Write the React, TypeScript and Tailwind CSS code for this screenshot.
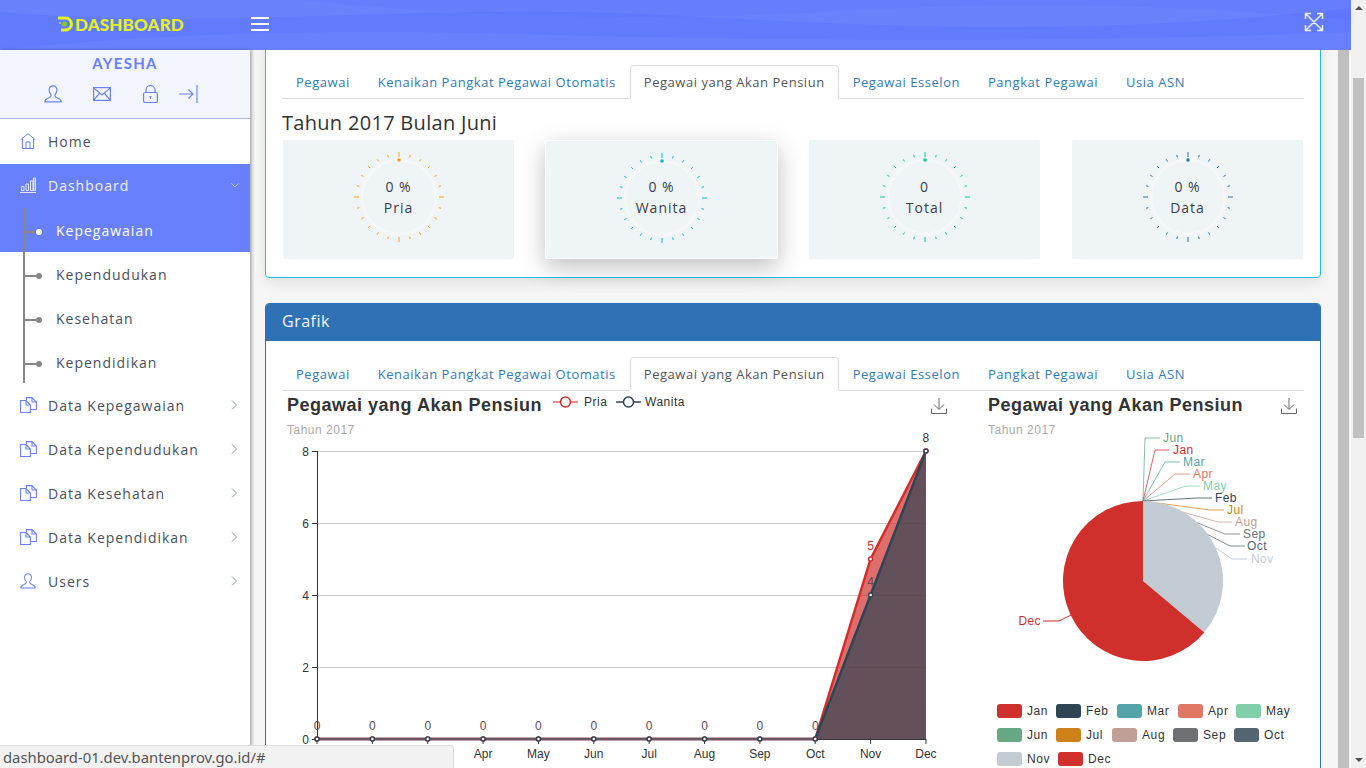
import React from "react";

const TABS = [
  "Pegawai",
  "Kenaikan Pangkat Pegawai Otomatis",
  "Pegawai yang Akan Pensiun",
  "Pegawai Esselon",
  "Pangkat Pegawai",
  "Usia ASN",
];

const GAUGES = [
  { value: "0 %", label: "Pria", color: "#ff9f0f", raised: false },
  { value: "0 %", label: "Wanita", color: "#12b5d9", raised: true },
  { value: "0", label: "Total", color: "#0acf97", raised: false },
  { value: "0 %", label: "Data", color: "#2e72b5", raised: false },
];

const MONTHS = ["Jan", "Feb", "Mar", "Apr", "May", "Jun", "Jul", "Aug", "Sep", "Oct", "Nov", "Dec"];

const PRIA = [0, 0, 0, 0, 0, 0, 0, 0, 0, 0, 5, 8];
const WANITA = [0, 0, 0, 0, 0, 0, 0, 0, 0, 0, 4, 8];

const PIE_LABELS = [
  { name: "Jun", color: "#68a784", x: 1145, y: 438, end: 1160, text: 1163 },
  { name: "Jan", color: "#d22f2c", x: 1155, y: 450, end: 1169, text: 1173 },
  { name: "Mar", color: "#53a3a9", x: 1165, y: 462, end: 1180, text: 1183 },
  { name: "Apr", color: "#e07864", x: 1175, y: 474, end: 1190, text: 1193 },
  { name: "May", color: "#80cfa9", x: 1186, y: 486, end: 1200, text: 1203 },
  { name: "Feb", color: "#2f4554", x: 1197, y: 498, end: 1212, text: 1215 },
  { name: "Jul", color: "#ce8119", x: 1210, y: 510, end: 1224, text: 1227 },
  { name: "Aug", color: "#bf9f97", x: 1218, y: 522, end: 1232, text: 1235 },
  { name: "Sep", color: "#6e7074", x: 1225, y: 534, end: 1240, text: 1243 },
  { name: "Oct", color: "#546570", x: 1230, y: 546, end: 1245, text: 1247 },
];

const PIE_LEGEND = [
  { name: "Jan", color: "#cf302c", x: 997, row: 0 },
  { name: "Feb", color: "#2f4554", x: 1056, row: 0 },
  { name: "Mar", color: "#53a3a9", x: 1117, row: 0 },
  { name: "Apr", color: "#e07864", x: 1178, row: 0 },
  { name: "May", color: "#80cfa9", x: 1236, row: 0 },
  { name: "Jun", color: "#68a784", x: 997, row: 1 },
  { name: "Jul", color: "#ce8119", x: 1056, row: 1 },
  { name: "Aug", color: "#bf9f97", x: 1112, row: 1 },
  { name: "Sep", color: "#6e7074", x: 1173, row: 1 },
  { name: "Oct", color: "#546570", x: 1234, row: 1 },
  { name: "Nov", color: "#c4ccd3", x: 997, row: 2 },
  { name: "Dec", color: "#cf302c", x: 1058, row: 2 },
];

const CHART_FONT = "'Liberation Sans', Arial, sans-serif";

const lineX = (i: number) => 317 + i * 55.36;
const lineY = (v: number) => 739 - v * 36;

function IconUser({ className }: { className?: string }) {
  return (
    <svg className={className} viewBox="0 0 18 18" fill="none" stroke="currentColor" strokeWidth="1.150">
      <path d="M9 .8C6.400.8 5.100 2.800 5.100 5.100c0 1.800.8 3.400 1.900 4.400v1.600c0 .8-1 1.300-3 2.100-1.800.7-3.200 1.600-3.200 3.600h16.400c0-2-1.400-2.900-3.200-3.600-2-.8-3-1.300-3-2.100V9.500c1.100-1 1.900-2.600 1.900-4.400C12.900 2.800 11.600.8 9 .8z" />
    </svg>
  );
}

function IconMail({ className }: { className?: string }) {
  return (
    <svg className={className} viewBox="0 0 18 14" fill="none" stroke="currentColor" strokeWidth="1.200">
      <rect x=".6" y=".6" width="16.800" height="12.800" />
      <path d="M.6.900 9 8l8.400-7.100M.6 13.400 6.700 6M17.400 13.400 11.300 6" />
    </svg>
  );
}

function IconLock({ className }: { className?: string }) {
  return (
    <svg className={className} viewBox="0 0 15 18" fill="none" stroke="currentColor" strokeWidth="1.200">
      <rect x=".6" y="7.500" width="13.800" height="10" rx="1.500" />
      <path d="M3 7.500V5a4.500 4.500 0 0 1 9 0v2.500M7.500 11.500v2.500M6.500 11.500h2" />
    </svg>
  );
}

function IconSignOut({ className }: { className?: string }) {
  return (
    <svg className={className} viewBox="0 0 19 18" fill="none" stroke="currentColor" strokeWidth="1.100">
      <path d="M0 9h14M9.500 4.500 14 9l-4.500 4.500M18 0v18" />
    </svg>
  );
}

function IconHome({ className }: { className?: string }) {
  return (
    <svg className={className} viewBox="0 0 16 16" fill="none" stroke="currentColor" strokeWidth="1">
      <path d="M.5 6.800 8 .8l7.500 6M2.500 6v9.500h11V6M6 15.500V9h4v6.500" />
    </svg>
  );
}

function IconBars({ className }: { className?: string }) {
  return (
    <svg className={className} viewBox="0 0 16 16" fill="none" stroke="currentColor" strokeWidth="1">
      <path d="M0 15.500h16M1.500 13.500v-4h2.500v4zM6 13.500v-6.500h2.500v6.500zM10.500 13.500V4H13v9.500z" />
      <path d="M13.500 13.500V1H15.500v12.500z" fill="currentColor" fillOpacity=".4" />
    </svg>
  );
}

function IconDocs({ className }: { className?: string }) {
  return (
    <svg className={className} viewBox="0 0 17 16" fill="none" stroke="currentColor" strokeWidth="1.100">
      <path d="M6 3.500H.6v12h9.800V8L6 3.500zM6 3.500V8h4.400" />
      <path d="M6.500 3V.6h5.500l4.400 4.400v7.500h-6M12 .6V5h4.400" />
    </svg>
  );
}

function Chevron({ open, className }: { open?: boolean; className?: string }) {
  return (
    <svg className={className} viewBox="0 0 10 10" fill="none" stroke="currentColor" strokeWidth="1">
      <path d={open ? "M.5 3 5 7.500 9.500 3" : "M3 .5 7.500 5 3 9.500"} />
    </svg>
  );
}

function Logo() {
  return (
    <svg className="w-[15px] h-[16px]" viewBox="0 0 15 16" fill="none">
      <path d="M0 2h7.500a6 6 0 0 1 0 12H3" stroke="#e6f01e" strokeWidth="3" />
      <circle cx="6.500" cy="8" r="2.600" fill="#7cc63f" />
      <path d="M1 7h2" stroke="#e6f01e" strokeWidth="1" />
    </svg>
  );
}

function HeaderWaves() {
  return (
    <svg className="absolute inset-0 w-full h-full" viewBox="0 0 1351 50" preserveAspectRatio="none">
      <path d="M0 12C200 30 420 4 640 14s420 26 711-6V0H0z" fill="#ffffff" fillOpacity=".05" />
      <path d="M0 50C120 36 300 28 520 34s520 10 831-2v18z" fill="#ffffff" fillOpacity=".04" />
      <path d="M300 0c160 16 340 22 520 12S1150 2 1351 20V0z" fill="#1e3cff" fillOpacity=".05" />
    </svg>
  );
}

function Header() {
  return (
    <header className="relative h-[50px] shrink-0 bg-[#627bfc] flex items-center overflow-hidden">
      <HeaderWaves />
      <div className="relative flex items-center pl-[58px] w-[251px] mb-[2px]">
        <Logo />
        <span className="ml-[2px] font-['Lato',sans-serif] font-black text-[17px] leading-none tracking-[0.15px] text-[#e6f01e]">
          DASHBOARD
        </span>
      </div>
      <div className="relative w-[18px] flex flex-col gap-[4px] mb-[3px]">
        <span className="h-[2px] bg-white" />
        <span className="h-[2px] bg-white" />
        <span className="h-[2px] bg-white" />
      </div>
      <svg
        className="absolute left-[1304px] top-[12px] w-[20px] h-[20px] text-[#eef0ff]"
        viewBox="0 0 20 20"
        fill="none"
        stroke="currentColor"
        strokeWidth="1.500"
      >
        <path d="M2 2l16 16M18 2 2 18M1.500 7V1.500H7M13 1.500h5.500V7M1.500 13v5.500H7M13 18.500h5.500V13" />
      </svg>
    </header>
  );
}

function MenuRow({
  icon,
  label,
  chevron = true,
}: {
  icon: React.ReactNode;
  label: string;
  chevron?: boolean;
}) {
  return (
    <div className="h-[44px] flex items-center pl-[20px] pr-[11px]">
      <span className="w-[28px] text-[#6a80fb]">{icon}</span>
      <span className="flex-1 text-[14px] tracking-[1px] text-[#4a4f5c]">{label}</span>
      {chevron && <Chevron className="w-[10px] h-[10px] text-[#8f96a3]" />}
    </div>
  );
}

function SubRow({ label, active }: { label: string; active?: boolean }) {
  return (
    <div className={`relative h-[44px] flex items-center pl-[56px] text-[14px] tracking-[1px] ${active ? "text-white" : "text-[#4a4f5c]"}`}>
      <span className="absolute left-[25px] top-[23px] w-[11px] h-[2px] bg-[#8a8585]" />
      <span className={`absolute left-[36px] top-[21px] w-[6px] h-[6px] rounded-full ${active ? "bg-white" : "bg-[#8a8585]"}`} />
      {label}
    </div>
  );
}

function Sidebar() {
  const icon = "w-[16px] h-[16px]";
  const doc = "w-[17px] h-[16px]";
  return (
    <aside className="w-[250px] shrink-0 h-full bg-white shadow-[2px_0_3px_rgba(0,0,0,0.3)] relative z-10 font-['Open_Sans',sans-serif]">
      <div className="h-[69px] bg-[#f2f5fb] border-b border-[#a9b5f0] flex flex-col items-center">
        <div className="mt-[4px] font-['Lato',sans-serif] font-bold text-[15px] leading-[18px] tracking-[1.3px] text-[#6a7ffc]">
          AYESHA
        </div>
        <div className="w-full relative mt-[13px] text-[#6a80fb] flex">
          <IconUser className="ml-[44px] w-[18px] h-[18px]" />
          <IconMail className="ml-[31px] mt-[2px] w-[18px] h-[14px]" />
          <IconLock className="ml-[32px] w-[15px] h-[18px]" />
          <IconSignOut className="ml-[21px] w-[19px] h-[18px]" />
        </div>
      </div>
      <MenuRow icon={<IconHome className={icon} />} label="Home" chevron={false} />
      <div className="mt-px bg-[#6880fc] h-[88px]">
        <div className="h-[42px] flex items-center pl-[20px] pr-[10px]">
          <IconBars className="w-[16px] h-[16px] text-[#e4e8ff] mr-[12px]" />
          <span className="flex-1 text-[14px] tracking-[1px] text-[#eef0ff]">Dashboard</span>
          <Chevron open className="w-[10px] h-[8px] text-[#d5dbff]" />
        </div>
      </div>
      <div className="relative -mt-[44px]">
        <span className="absolute left-[23px] top-0 w-[2px] h-[175px] bg-[#8a8585]" />
        <SubRow label="Kepegawaian" active />
        <SubRow label="Kependudukan" />
        <SubRow label="Kesehatan" />
        <SubRow label="Kependidikan" />
      </div>
      <div className="-mt-px">
        <MenuRow icon={<IconDocs className={doc} />} label="Data Kepegawaian" />
        <MenuRow icon={<IconDocs className={doc} />} label="Data Kependudukan" />
        <MenuRow icon={<IconDocs className={doc} />} label="Data Kesehatan" />
        <MenuRow icon={<IconDocs className={doc} />} label="Data Kependidikan" />
        <MenuRow icon={<IconUser className={icon} />} label="Users" />
      </div>
    </aside>
  );
}

function Tabs() {
  return (
    <div className="h-[34px] flex border-b border-[#dddddd] font-['Open_Sans',sans-serif] text-[13px] tracking-[0.53px]">
      {TABS.map((tab, i) =>
        i === 2 ? (
          <div
            key={tab}
            className="h-[34px] px-[13px] pt-[2px] border border-[#dddddd] border-b-white bg-white rounded-t-[4px] flex items-center text-[#555555]"
          >
            {tab}
          </div>
        ) : (
          <div key={tab} className="h-[33px] px-[14px] pt-[2px] flex items-center text-[#337ab7]">
            {tab}
          </div>
        )
      )}
    </div>
  );
}

function Gauge({ value, label, color, raised }: (typeof GAUGES)[number]) {
  const ticks = Array.from({ length: 24 }, (_, i) => i * 15);
  return (
    <div
      className={`relative h-[119px] rounded-[2px] bg-[#eff4f7] flex flex-col items-center justify-center font-['Open_Sans',sans-serif] text-[14px] tracking-[1px] text-[#3c3f48] last:ml-px ${
        raised ? "w-[233px] border border-white shadow-[0_8px_24px_rgba(0,0,0,0.25)]" : "w-[231px]"
      }`}
    >
      <svg className="absolute left-1/2 top-[11px] -ml-[46px] w-[92px] h-[92px]" viewBox="-46 -46 92 92" fill="none">
        <circle r="37" stroke="#f6f7f8" strokeWidth="3" />
        {ticks.map((deg) => {
          const major = deg % 90 === 0;
          const rad = (deg * Math.PI) / 180;
          const r1 = major ? 40 : 41;
          const r2 = major ? 45 : 43.5;
          return (
            <line
              key={deg}
              x1={r1 * Math.sin(rad)}
              y1={-r1 * Math.cos(rad)}
              x2={r2 * Math.sin(rad)}
              y2={-r2 * Math.cos(rad)}
              stroke={color}
              strokeWidth="1"
            />
          );
        })}
        <circle cy="-37" r="1.800" fill={color} />
      </svg>
      <div className="relative leading-[21px] -mt-[6px]">{value}</div>
      <div className="relative leading-[21px]">{label}</div>
    </div>
  );
}

function DownloadIcon({ x, y }: { x: number; y: number }) {
  return (
    <path
      transform={`translate(${x} ${y})`}
      d="M8 0v11M3 6.500 8 11.500l5-5M.5 10.500v5h15v-5"
      fill="none"
      stroke="#666666"
      strokeWidth="1"
    />
  );
}

function LineChart() {
  const ticks = [0, 2, 4, 6, 8];
  const area = (vals: number[]) =>
    `317,739 ${vals.map((v, i) => `${lineX(i)},${lineY(v)}`).join(" ")} 926,739`;
  const line = (vals: number[]) => vals.map((v, i) => `${lineX(i)},${lineY(v)}`).join(" ");
  return (
    <svg className="w-[678px] h-[377px] shrink-0" viewBox="282 391 678 377" style={{ fontFamily: CHART_FONT }}>
      <text x="287" y="411" fontSize="18" fontWeight="700" fill="#333333" letterSpacing="0.5">
        Pegawai yang Akan Pensiun
      </text>
      <text x="287" y="434" fontSize="12" fill="#aaaaaa" letterSpacing="0.5">
        Tahun 2017
      </text>

      <line x1="553" x2="578" y1="402" y2="402" stroke="#d22f2c" strokeWidth="1.500" opacity=".7" />
      <circle cx="565.500" cy="402" r="5" fill="#ffffff" stroke="#d22f2c" strokeWidth="1.500" />
      <text x="584" y="406" fontSize="12" fill="#333333" letterSpacing="0.5">Pria</text>
      <line x1="616" x2="641" y1="402" y2="402" stroke="#2f4554" strokeWidth="1.500" />
      <circle cx="628.500" cy="402" r="5" fill="#ffffff" stroke="#2f4554" strokeWidth="1.500" />
      <text x="645" y="406" fontSize="12" fill="#333333" letterSpacing="0.5">Wanita</text>
      <DownloadIcon x={931} y={398} />

      {ticks.slice(1).map((t) => (
        <line key={t} x1="317" x2="926" y1={lineY(t) + 0.5} y2={lineY(t) + 0.5} stroke="#cccccc" />
      ))}
      <line x1="317.500" x2="317.500" y1="451" y2="740" stroke="#333333" />
      {ticks.map((t) => (
        <g key={t}>
          <line x1="312" x2="317" y1={lineY(t) + 0.5} y2={lineY(t) + 0.5} stroke="#333333" />
          <text x="309" y={lineY(t) + 5} fontSize="12" fill="#333333" textAnchor="end">
            {t}
          </text>
        </g>
      ))}

      <polygon points={area(PRIA)} fill="#d22f2c" fillOpacity=".7" />
      <polygon points={area(WANITA)} fill="#2f4554" fillOpacity=".7" />
      <line x1="317" x2="926" y1="739.500" y2="739.500" stroke="#333333" />
      {MONTHS.map((m, i) => (
        <g key={m}>
          <line x1={lineX(i)} x2={lineX(i)} y1="739" y2="744" stroke="#333333" />
          <text x={lineX(i)} y="758" fontSize="12" fill="#333333" textAnchor="middle">
            {m}
          </text>
        </g>
      ))}
      <polyline points={line(PRIA)} fill="none" stroke="#d22f2c" strokeWidth="2.500" />
      <polyline points={line(WANITA)} fill="none" stroke="#2f4554" strokeWidth="2.500" />
      <line x1="317" x2="815" y1="739" y2="739" stroke="#a06a72" />
      {PRIA.map((v, i) => (
        <g key={`p${i}`}>
          <circle cx={lineX(i)} cy={lineY(v)} r="2" fill="#ffffff" stroke="#d22f2c" strokeWidth="1.500" />
          {v !== WANITA[i] && (
            <text x={lineX(i)} y={lineY(v) - 9} fontSize="12" fill="#d22f2c" textAnchor="middle">
              {v}
            </text>
          )}
        </g>
      ))}
      {WANITA.map((v, i) => (
        <g key={`w${i}`}>
          <circle cx={lineX(i)} cy={lineY(v)} r="2" fill="#ffffff" stroke="#2f4554" strokeWidth="1.500" />
          <text x={lineX(i)} y={lineY(v) - 9} fontSize="12" fill={v === 8 ? "#333333" : "#5c4a56"} textAnchor="middle">
            {v}
          </text>
        </g>
      ))}
    </svg>
  );
}

function PieChart() {
  return (
    <svg className="w-[344px] h-[377px] shrink-0" viewBox="960 391 344 377" style={{ fontFamily: CHART_FONT }}>
      <text x="988" y="411" fontSize="18" fontWeight="700" fill="#333333" letterSpacing="0.5">
        Pegawai yang Akan Pensiun
      </text>
      <text x="988" y="434" fontSize="12" fill="#aaaaaa" letterSpacing="0.5">
        Tahun 2017
      </text>
      <DownloadIcon x={1281} y={398} />

      {PIE_LABELS.map((l) => (
        <g key={l.name}>
          <polyline points={`1143,501 ${l.x},${l.y} ${l.end},${l.y}`} fill="none" stroke={l.color} opacity=".75" />
          <text x={l.text} y={l.y + 4} fontSize="12" fill={l.color} letterSpacing="0.4">
            {l.name}
          </text>
        </g>
      ))}
      <polyline points="1216,548 1232,559 1247,559" fill="none" stroke="#c4ccd3" />
      <text x="1251" y="563" fontSize="12" fill="#c4ccd3" letterSpacing="0.4">Nov</text>
      <polyline points="1071,615 1059,621 1043,621" fill="none" stroke="#cf302c" />
      <text x="1041" y="625" fontSize="12" fill="#cf302c" textAnchor="end" letterSpacing="0.4">Dec</text>

      <path d="M1143 581V501A80 80 0 0 1 1204.300 632.400z" fill="#c4ccd3" />
      <path d="M1143 581L1204.300 632.400A80 80 0 1 1 1143 501z" fill="#cf302c" />

      {PIE_LEGEND.map((l) => {
        const y = 704 + l.row * 24;
        return (
          <g key={l.name}>
            <rect x={l.x} y={y} width="25" height="14" rx="3" fill={l.color} />
            <text x={l.x + 30} y={y + 11} fontSize="12" fill="#333333" letterSpacing="0.6">
              {l.name}
            </text>
          </g>
        );
      })}
    </svg>
  );
}

export default function App() {
  return (
    <div className="relative w-screen h-screen overflow-hidden flex bg-[#f1f1f1]">
      <div className="w-[1351px] shrink-0 h-full flex flex-col">
        <Header />
        <div className="flex flex-1 min-h-0">
          <Sidebar />
          <main className="flex-1 min-w-0 flex bg-[#f6f6f6]">
            <div className="w-[1088px] shrink-0 overflow-hidden pl-[15px]">
              <section className="w-[1056px] -mt-[10px] h-[238px] bg-white border border-[#22bfdc] rounded-[4px] px-[16px] pt-[24px] shadow-[0_4px_14px_rgba(0,0,0,0.1)]">
                <Tabs />
                <h2 className="h-[41px] pt-[9px] font-['Open_Sans',sans-serif] text-[20px] leading-[30px] tracking-[0.3px] text-[#333333]">
                  Tahun 2017 Bulan Juni
                </h2>
                <div className="flex gap-[31px] mx-px">
                  {GAUGES.map((g) => (
                    <Gauge key={g.label} {...g} />
                  ))}
                </div>
              </section>

              <section className="w-[1056px] mt-[25px] bg-white border border-[#2e72b5] rounded-[4px] overflow-hidden h-[500px]">
                <div className="h-[37px] bg-[#2e72b5] px-[16px] pb-[3px] flex items-center font-['Open_Sans',sans-serif] text-[16px] tracking-[0.5px] text-[#f4f7fb]">
                  Grafik
                </div>
                <div className="px-[16px] pt-[16px]">
                  <Tabs />
                  <div className="flex">
                    <LineChart />
                    <PieChart />
                  </div>
                </div>
              </section>
            </div>
            <div className="w-[11px] shrink-0 bg-[#bfbfbf]" />
            <div className="flex-1" />
          </main>
        </div>
      </div>

      <div className="w-[15px] shrink-0 h-full flex flex-col items-center bg-[#f1f1f1]">
        <div className="h-[16px] flex items-center justify-center text-[#505050]">
          <span className="w-0 h-0 border-x-[4px] border-x-transparent border-b-[4px] border-b-[#505050]" />
        </div>
        <div className="mt-[62px] w-[11px] h-[360px] bg-[#c1c1c1]" />
        <div className="flex-1" />
        <div className="h-[16px] flex items-center justify-center">
          <span className="w-0 h-0 border-x-[4px] border-x-transparent border-t-[4px] border-t-[#505050]" />
        </div>
      </div>

      <div className="absolute left-0 bottom-0 z-20 w-[454px] h-[23px] pl-[3px] bg-[#f2f2f2] border-t border-r border-[#dcdcdc] rounded-tr-[3px] flex items-center font-['Noto_Sans',sans-serif] text-[14.8px] text-[#555555]">
        dashboard-01.dev.bantenprov.go.id/#
      </div>
    </div>
  );
}
